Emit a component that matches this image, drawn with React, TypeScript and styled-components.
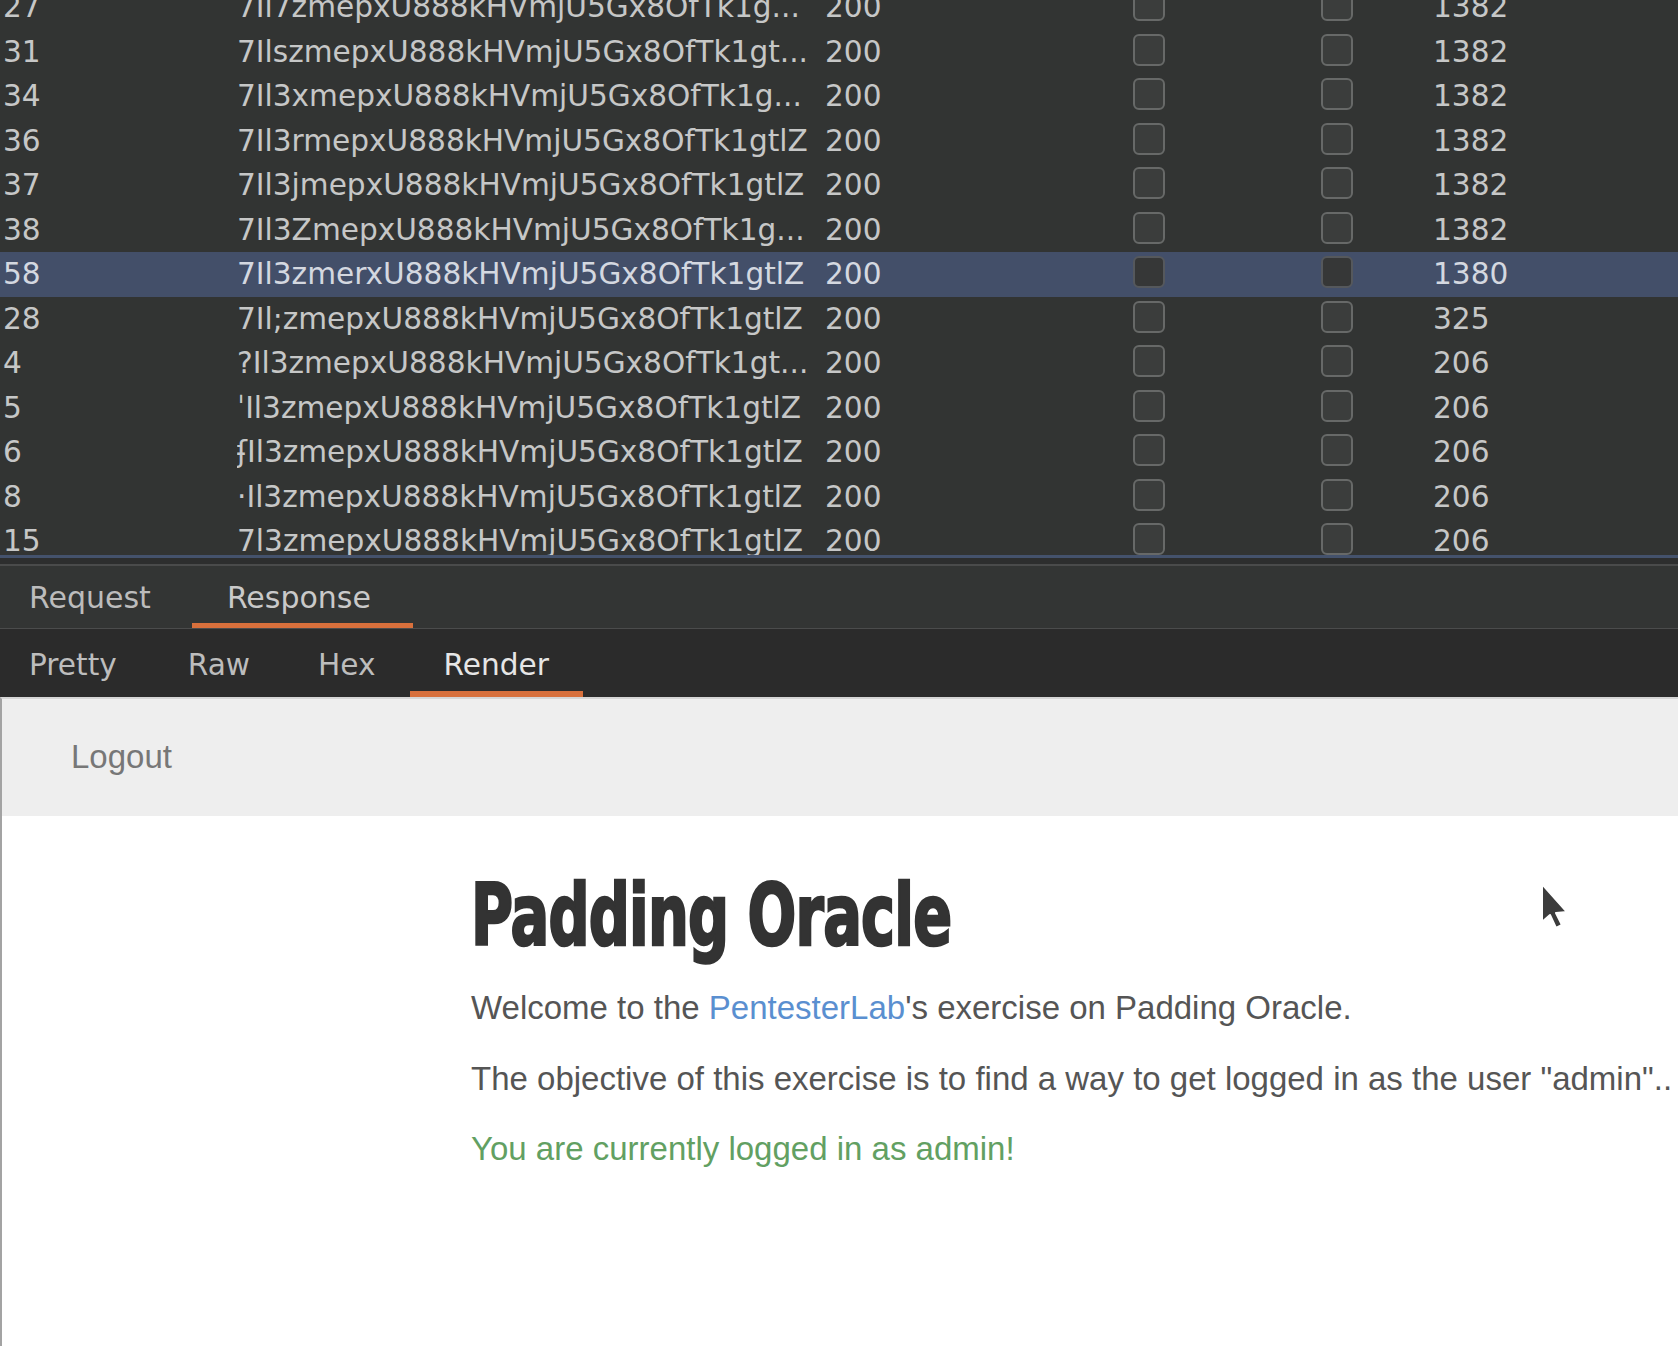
import React from 'react';
import styled, { createGlobalStyle } from 'styled-components';

type ResultRow = {
    id: number;
    payload: string;
    status: number;
    length: number;
    selected?: boolean;
};

const rows: ResultRow[] = [
    { id: 27, payload: '7Il7zmepxU888kHVmjU5Gx8OfTk1g...', status: 200, length: 1382 },
    { id: 31, payload: '7IlszmepxU888kHVmjU5Gx8OfTk1gt...', status: 200, length: 1382 },
    { id: 34, payload: '7Il3xmepxU888kHVmjU5Gx8OfTk1g...', status: 200, length: 1382 },
    { id: 36, payload: '7Il3rmepxU888kHVmjU5Gx8OfTk1gtlZ', status: 200, length: 1382 },
    { id: 37, payload: '7Il3jmepxU888kHVmjU5Gx8OfTk1gtlZ', status: 200, length: 1382 },
    { id: 38, payload: '7Il3ZmepxU888kHVmjU5Gx8OfTk1g...', status: 200, length: 1382 },
    { id: 58, payload: '7Il3zmerxU888kHVmjU5Gx8OfTk1gtlZ', status: 200, length: 1380, selected: true },
    { id: 28, payload: '7Il;zmepxU888kHVmjU5Gx8OfTk1gtlZ', status: 200, length: 325 },
    { id: 4, payload: '?Il3zmepxU888kHVmjU5Gx8OfTk1gt...', status: 200, length: 206 },
    { id: 5, payload: '\u02C8Il3zmepxU888kHVmjU5Gx8OfTk1gtlZ', status: 200, length: 206 },
    { id: 6, payload: '\u0284Il3zmepxU888kHVmjU5Gx8OfTk1gtlZ', status: 200, length: 206 },
    { id: 8, payload: '\u00B7Il3zmepxU888kHVmjU5Gx8OfTk1gtlZ', status: 200, length: 206 },
    { id: 15, payload: '7l3zmepxU888kHVmjU5Gx8OfTk1gtlZ', status: 200, length: 206 },
];

const Global = createGlobalStyle`
  html, body {
    margin: 0;
    padding: 0;
    background: #2b2b2b;
  }
`;

const Page = styled.div`
  position: relative;
  display: flex;
  flex-direction: column;
  width: 1678px;
  height: 1346px;
  overflow: hidden;
  font-family: "DejaVu Sans", "Noto Sans", sans-serif;
`;

const TableViewport = styled.div`
  height: 555px;
  overflow: hidden;
  background: #323433;
  border-bottom: 3px solid #44526c;
`;

const Rows = styled.div`
  margin-top: -15px;
`;

const Row = styled.div<{ $selected?: boolean }>`
  display: grid;
  grid-template-columns: 234px 588px 308px 188px 112px 1fr;
  align-items: center;
  height: 44.5px;
  padding-left: 3px;
  background: ${(p) => (p.$selected ? '#434f69' : 'transparent')};
  color: ${(p) => (p.$selected ? '#d4d8e0' : '#c6c7c7')};
  font-size: 29.6px;
  white-space: nowrap;
`;

const Cell = styled.span`
  overflow: hidden;
`;

const Checkbox = styled.span<{ $selected?: boolean }>`
  display: block;
  width: 28px;
  height: 28px;
  margin-top: -4px;
  border: 2px solid ${(p) => (p.$selected ? '#55585c' : '#676968')};
  border-radius: 6px;
  background: ${(p) => (p.$selected ? '#363737' : '#3b3d3c')};
`;

const Gap = styled.div`
  height: 6px;
  background: #2d2e2e;
  border-bottom: 2px solid #4a4b4b;
`;

const TabBar = styled.div`
  display: flex;
  height: 62px;
  background: #333534;
  border-bottom: 1px solid #4b4c4c;
`;

const Tab = styled.div<{ $active?: boolean }>`
  display: flex;
  align-items: center;
  padding: 0 42px 0 35px;
  color: ${(p) => (p.$active ? '#c9c9c9' : '#bcbcbc')};
  font-size: 30px;
  box-shadow: ${(p) => (p.$active ? 'inset 0 -5px 0 #d8703c, inset 0 -1px 0 #333534' : 'none')};

  &:first-child {
    padding-left: 29px;
    padding-right: 41px;
  }
`;

const SubTabBar = styled.div`
  display: flex;
  height: 68px;
  background: #2b2b2b;
`;

const SubTab = styled.div<{ $active?: boolean }>`
  display: flex;
  align-items: center;
  padding: 4px 34px 0 34px;
  color: ${(p) => (p.$active ? '#e6e6e6' : '#bdbdbd')};
  font-size: 29.6px;
  box-shadow: ${(p) => (p.$active ? 'inset 0 -6px 0 #d8703c, inset 0 -2px 0 #2b2b2b' : 'none')};

  &:first-child {
    padding-left: 29px;
    padding-right: 37px;
  }
`;

const RenderPanel = styled.div`
  flex: 1;
  display: flex;
  flex-direction: column;
  background: #ffffff;
  border-left: 2px solid #a3a3a3;
  border-top: 2px solid #d6d6d6;
  font-family: "Liberation Sans", Arial, sans-serif;
  white-space: nowrap;
  overflow: hidden;
`;

const NavBar = styled.div`
  display: flex;
  align-items: center;
  height: 117px;
  padding-left: 69px;
  background: #eeeeee;
`;

const NavLink = styled.span`
  color: #777777;
  font-size: 33px;
  padding-bottom: 2px;
`;

const Content = styled.div`
  padding: 53px 0 0 469px;
`;

const Heading = styled.h1`
  margin: 0 0 23px;
  font-family: "DejaVu Sans Condensed", "DejaVu Sans", sans-serif;
  font-weight: bold;
  font-size: 85px;
  line-height: 93px;
  letter-spacing: -1px;
  color: #333333;
  transform: scaleX(0.75);
  transform-origin: left center;
  -webkit-text-stroke: 2.5px #333333;
`;

const Paragraph = styled.p<{ $tone?: 'success' }>`
  margin: 0 0 24.5px;
  font-size: 33px;
  line-height: 46px;
  color: ${(p) => (p.$tone === 'success' ? '#62a062' : '#555555')};
`;

const Link = styled.span`
  color: #5a8fd0;
`;

const Cursor = styled.svg`
  position: absolute;
  left: 1540px;
  top: 882px;
`;

export default function App() {
    return (
        <>
            <Global />
            <Page>
                <TableViewport>
                    <Rows>
                        {rows.map((r) => (
                            <Row key={r.id} $selected={r.selected}>
                                <Cell>{r.id}</Cell>
                                <Cell>{r.payload}</Cell>
                                <Cell>{r.status}</Cell>
                                <Checkbox $selected={r.selected} />
                                <Checkbox $selected={r.selected} />
                                <Cell>{r.length}</Cell>
                            </Row>
                        ))}
                    </Rows>
                </TableViewport>
                <Gap />
                <TabBar>
                    <Tab>Request</Tab>
                    <Tab $active>Response</Tab>
                </TabBar>
                <SubTabBar>
                    <SubTab>Pretty</SubTab>
                    <SubTab>Raw</SubTab>
                    <SubTab>Hex</SubTab>
                    <SubTab $active>Render</SubTab>
                </SubTabBar>
                <RenderPanel>
                    <NavBar>
                        <NavLink>Logout</NavLink>
                    </NavBar>
                    <Content>
                        <Heading>Padding Oracle</Heading>
                        <Paragraph>
                            Welcome to the <Link>PentesterLab</Link>'s exercise on Padding Oracle.
                        </Paragraph>
                        <Paragraph>
                            The objective of this exercise is to find a way to get logged in as the user "admin"..
                        </Paragraph>
                        <Paragraph $tone="success">You are currently logged in as admin!</Paragraph>
                    </Content>
                </RenderPanel>
                <Cursor width="30" height="50" viewBox="0 0 30 50">
                    <path
                        d="M2 2 L2 40 L10 33 L16 46 L22 43 L16 31 L27 30 Z"
                        fill="#3c3c3c"
                        stroke="#ffffff"
                        strokeWidth="2"
                        strokeLinejoin="round"
                    />
                </Cursor>
            </Page>
        </>
    );
}
